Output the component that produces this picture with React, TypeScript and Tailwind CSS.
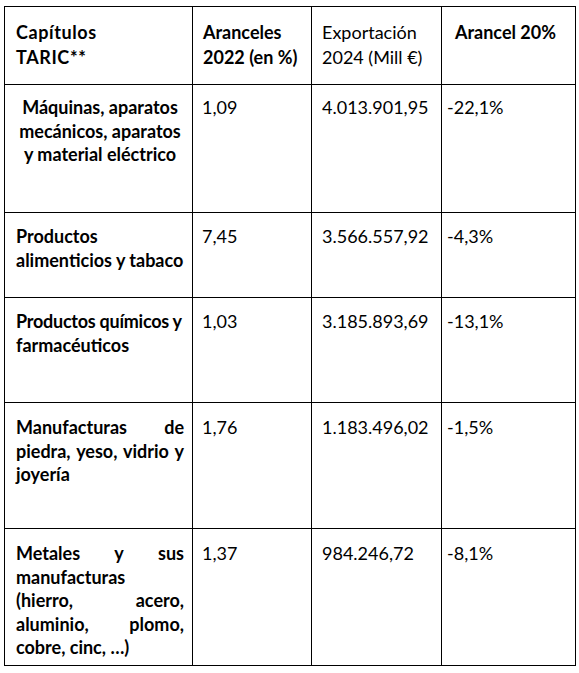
type Line = { text: string; justify?: boolean; tight?: boolean };

const rows: {
  lines: Line[];
  align: string;
  pt: string;
  tariff: string;
  exports: string;
  impact: string;
}[] = [
  {
    lines: [{ text: 'Máquinas, aparatos' }, { text: 'mecánicos, aparatos' }, { text: 'y material eléctrico' }],
    align: 'text-center',
    pt: 'pt-[11px]',
    tariff: '1,09',
    exports: '4.013.901,95',
    impact: '-22,1%',
  },
  {
    lines: [{ text: 'Productos' }, { text: 'alimenticios y tabaco' }],
    align: 'text-left',
    pt: 'pt-[12px]',
    tariff: '7,45',
    exports: '3.566.557,92',
    impact: '-4,3%',
  },
  {
    lines: [{ text: 'Productos químicos y', tight: true }, { text: 'farmacéuticos' }],
    align: 'text-left',
    pt: 'pt-[12px]',
    tariff: '1,03',
    exports: '3.185.893,69',
    impact: '-13,1%',
  },
  {
    lines: [
      { text: 'Manufacturas de', justify: true },
      { text: 'piedra, yeso, vidrio y', justify: true },
      { text: 'joyería' },
    ],
    align: 'text-left',
    pt: 'pt-[13px]',
    tariff: '1,76',
    exports: '1.183.496,02',
    impact: '-1,5%',
  },
  {
    lines: [
      { text: 'Metales y sus', justify: true },
      { text: 'manufacturas' },
      { text: '(hierro, acero,', justify: true },
      { text: 'aluminio, plomo,', justify: true },
      { text: 'cobre, cinc, …)' },
    ],
    align: 'text-left',
    pt: 'pt-[13px]',
    tariff: '1,37',
    exports: '984.246,72',
    impact: '-8,1%',
  },
];

export default function App() {
  return (
    <div className="min-h-screen bg-white font-['Lato',sans-serif] text-[18px] text-black">
      <div className="ml-[4px] pt-[6px]">
        <div className="grid w-[572px] grid-cols-[188px_119px_130px_134px] grid-rows-[78px_128px_85px_105px_126px_137px] border-l border-t border-black">
          {/* header */}
          <div className="border-b border-r border-black pl-[11px] pr-[8px] pt-[13px] font-bold leading-[24.5px] tracking-[0.6px]">
            Capítulos
            <br />
            TARIC**
          </div>
          <div className="border-b border-r border-black pl-[10px] pr-[4px] pt-[13px] font-bold leading-[24.5px]">
            Aranceles
            <br />
            2022 (en %)
          </div>
          <div className="border-b border-r border-black pl-[10px] pr-[4px] pt-[13px] leading-[24.5px]">
            Exportación
            <br />
            2024 (Mill €)
          </div>
          <div className="border-b border-r border-black pl-[13px] pr-[4px] pt-[13px] font-bold leading-[24.5px]">
            Arancel 20%
          </div>

          {rows.map((r) => (
            <div key={r.tariff} className="contents">
              <div className={`border-b border-r border-black pl-[11px] pr-[8px] ${r.pt} ${r.align} font-bold leading-[23.5px]`}>
                {r.lines.map((l) => (
                  <div
                    key={l.text}
                    className={
                      (l.justify ? 'text-justify whitespace-nowrap [text-align-last:justify]' : 'whitespace-nowrap') +
                      (l.tight ? ' tracking-[-0.25px]' : '')
                    }
                  >
                    {l.text}
                  </div>
                ))}
              </div>
              <div className={`border-b border-r border-black pl-[9px] ${r.pt} leading-[23.5px]`}>
                {r.tariff}
              </div>
              <div className={`border-b border-r border-black pl-[10px] ${r.pt} leading-[23.5px]`}>
                {r.exports}
              </div>
              <div className={`border-b border-r border-black pl-[5px] ${r.pt} leading-[23.5px]`}>
                {r.impact}
              </div>
            </div>
          ))}
        </div>
      </div>
    </div>
  );
}
